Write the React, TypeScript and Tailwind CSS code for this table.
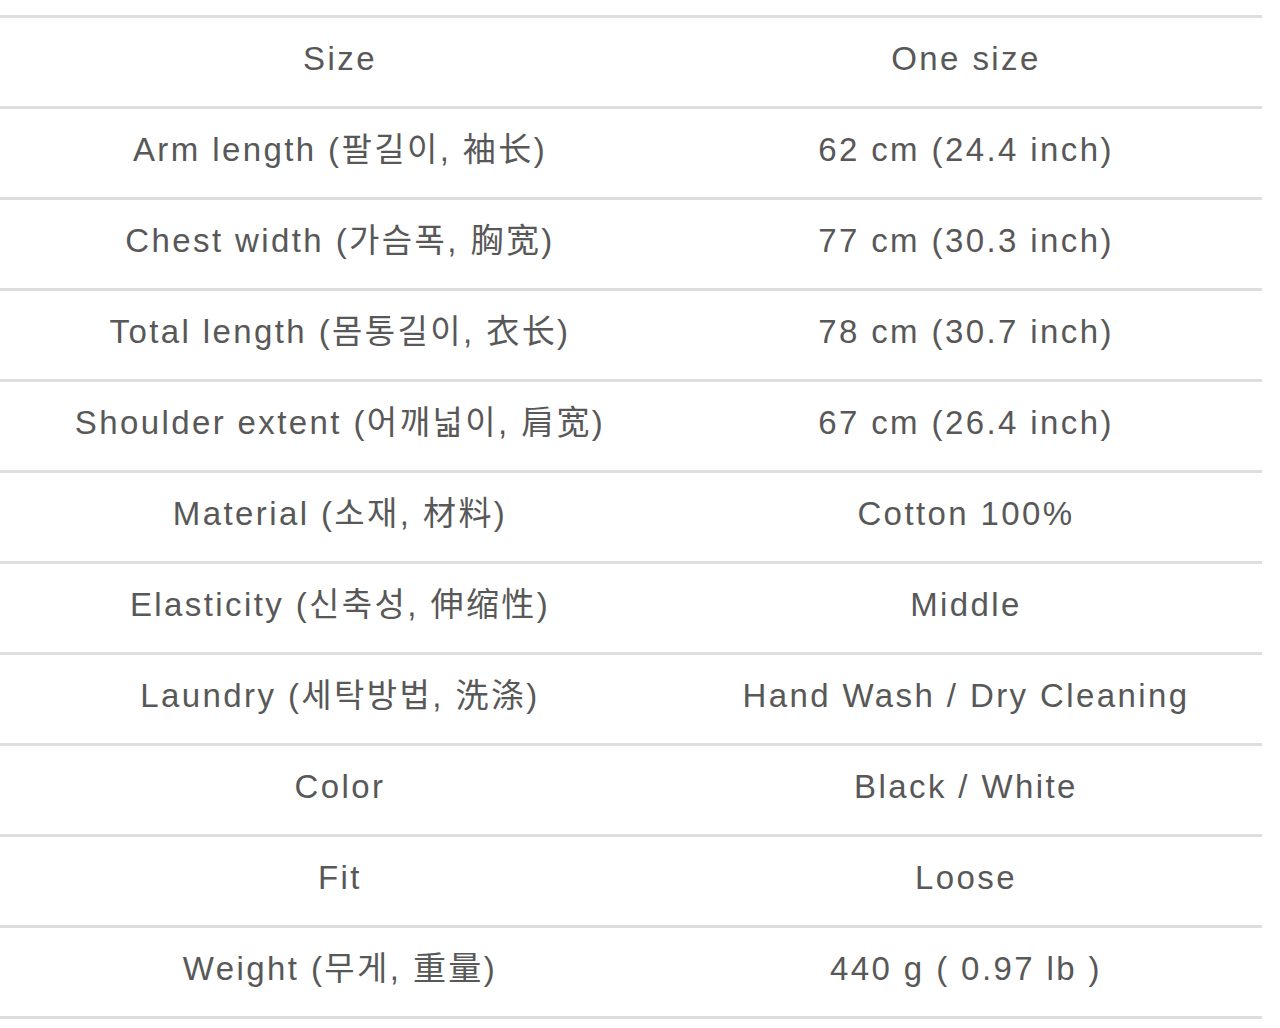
const ROWS = [
  ['Size', 'One size'],
  ['Arm length (팔길이, 袖长)', '62 cm (24.4 inch)'],
  ['Chest width (가슴폭, 胸宽)', '77 cm (30.3 inch)'],
  ['Total length (몸통길이, 衣长)', '78 cm (30.7 inch)'],
  ['Shoulder extent (어깨넓이, 肩宽)', '67 cm (26.4 inch)'],
  ['Material (소재, 材料)', 'Cotton 100%'],
  ['Elasticity (신축성, 伸缩性)', 'Middle'],
  ['Laundry (세탁방법, 洗涤)', 'Hand Wash / Dry Cleaning'],
  ['Color', 'Black / White'],
  ['Fit', 'Loose'],
  ['Weight (무게, 重量)', '440 g ( 0.97 lb )'],
];

export default function App() {
  return (
    <div className="w-[1280px] h-[1028px] bg-white pt-[15px] overflow-hidden">
      <div
        className="w-[1262px] border-t-[3px] border-[#dedede] text-[#585858] text-[33px]"
        style={{ fontFamily: '"Liberation Sans", "Noto Sans CJK KR", "Noto Sans CJK SC", sans-serif' }}
      >
        {ROWS.map(([label, value]) => (
          <div key={label} className="grid grid-cols-[680px_1fr] h-[91px] border-b-[3px] border-[#dedede] items-center pb-[6px]">
            <div className="text-center tracking-[2.4px]">{label}</div>
            <div className="text-center tracking-[2.4px] pr-[10px]">{value}</div>
          </div>
        ))}
      </div>
    </div>
  );
}
